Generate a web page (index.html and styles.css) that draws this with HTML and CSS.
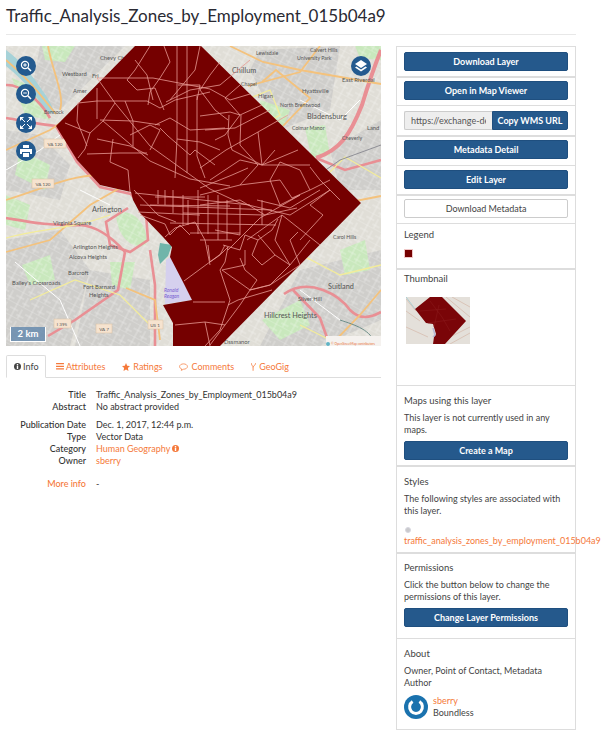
FILE: index.html
```html
<!DOCTYPE html>
<html lang="en">
<head>
	<meta charset="UTF-8">
	<title>Traffic_Analysis_Zones_by_Employment_015b04a9</title>
	<link rel="stylesheet" href="styles.css">
</head>
<body>
	<div class="page">
		<h1 class="title">Traffic_Analysis_Zones_by_Employment_015b04a9</h1>
		<div class="layout">
			<!--left column-->
			<div class="main">
				<div class="map">
					<svg class="map-art" viewBox="6 46 375 300" width="375" height="300">
						<defs>
							<pattern id="streets" width="17" height="13" patternUnits="userSpaceOnUse" patternTransform="rotate(28)">
								<path d="M0 0H17M5 0V13M0 6H9M12 3V13M9 10H17" stroke="#fff" stroke-width=".6" fill="none"/>
							</pattern>
							<filter id="soft"><feGaussianBlur stdDeviation=".4"/></filter>
						</defs>
						<g filter="url(#soft)">
							<rect x="6" y="46" width="375" height="300" fill="#e0ded7"/>
							<!--urban and park patches-->
							<g fill="#cfcecb">
								<path d="M40 46L125 46L60 110L30 100Z"/>
								<path d="M6 240L60 230L90 270L70 346L6 346Z"/>
								<path d="M90 270L150 280L150 346L75 346Z"/>
								<path d="M260 50L340 46L330 110L280 130L250 70Z"/>
								<path d="M330 150L381 120L381 190L340 190Z"/>
								<path d="M300 270L381 250L381 320L320 346L260 346Z"/>
								<path d="M6 130L40 135L70 165L60 200L6 190Z"/>
							</g>
							<g fill="#c9e8bd">
								<path d="M42 46L75 46L65 62L45 60Z"/>
								<path d="M12 78L40 90L50 120L25 115Z"/>
								<path d="M116 215C130 205 150 225 146 245C135 250 118 240 116 215Z"/>
								<path d="M22 265L50 255L55 280L30 285Z"/>
								<path d="M110 262L135 262L130 290L112 285Z"/>
								<path d="M260 100L290 110L280 135L262 125Z"/>
								<path d="M305 128L325 125L330 155L312 160Z"/>
								<path d="M355 46L381 46L381 60L360 58Z"/>
								<path d="M340 250L365 240L370 270L345 275Z"/>
								<path d="M262 320L300 300L310 325L280 340Z"/>
								<path d="M20 150L50 165L45 190L15 175Z"/>
								<path d="M6 195L30 205L25 230L6 225Z"/>
							</g>
							<rect x="6" y="46" width="375" height="300" fill="url(#streets)" opacity=".6"/>
							<path d="M166 260L172 256L185 285L192 300L165 304Z" fill="#d5d0ee"/>
							<path d="M6 50C20 60 32 75 42 90C50 100 52 108 56 114L46 112C38 98 28 84 6 66Z" fill="#a6d2d8"/>
							<path d="M160 243L172 245L168 256L160 264L158 255Z" fill="#6fb5aa"/>
							<!--roads-->
							<g fill="none" stroke="#e98f94" stroke-width="2.6">
								<path d="M6 118C20 120 36 124 56 126L77 162L100 187L131 194"/>
								<path d="M6 85C20 84 40 100 50 118"/>
								<path d="M131 194L146 214L148 240L130 252L110 245L106 222L128 208"/>
								<path d="M6 218C30 222 50 226 80 225C95 226 110 235 125 252"/>
								<path d="M125 252L118 290L75 320L48 336"/>
								<path d="M150 250L155 285L155 346"/>
								<path d="M284 294C310 276 340 296 350 310C360 320 370 318 381 312"/>
								<path d="M293 290L320 318L330 346"/>
								<path d="M316 158C340 150 350 135 362 105C368 85 375 65 381 50" stroke-width="4"/>
								<path d="M316 158L345 170L381 160"/>
							</g>
							<g fill="none" stroke="#f4c27c" stroke-width="1.8">
								<path d="M48 46C52 70 65 95 60 110"/>
								<path d="M6 60C30 80 40 95 56 114"/>
								<path d="M6 150L50 130L65 120"/>
								<path d="M6 200C40 190 70 175 100 175"/>
								<path d="M6 252L50 240L90 205L125 185"/>
								<path d="M230 46L263 62L300 70L381 84"/>
								<path d="M248 86L300 72L320 46"/>
								<path d="M262 82L276 70L310 98L283 126"/>
								<path d="M126 288L155 300L160 340"/>
								<path d="M340 204L381 196"/>
								<path d="M330 346L360 315L381 290"/>
							</g>
							<g fill="none" stroke="#f3ec9a" stroke-width="1.3">
								<path d="M6 238C40 228 70 230 110 215"/>
								<path d="M245 100L270 90L280 115L258 128"/>
								<path d="M30 300L75 280L120 295L150 325"/>
								<path d="M292 250L340 275L381 265"/>
								<path d="M330 172L345 157L381 178"/>
								<path d="M300 325L340 345"/>
							</g>
							<g fill="none" stroke="#fff" stroke-width="1">
								<path d="M6 170L40 150L60 135"/>
								<path d="M15 262L60 300L80 346"/>
								<path d="M80 190L110 205"/>
								<path d="M300 100L340 120L360 100"/>
								<path d="M300 290L340 320"/>
							</g>
							<path d="M310 181L340 160L381 145" fill="none" stroke="#8f8f96" stroke-width="1"/>
							<path d="M340 320C355 325 372 330 375 345" fill="none" stroke="#6d8f8a" stroke-width="1"/>
						</g>
						<!--labels-->
						<g class="map-label">
							<text x="100" y="60">Chevy Ch</text>
							<text x="62" y="76">Westbard</text>
							<text x="92" y="78">Fri</text>
							<text x="73" y="93">Amer</text>
							<text x="44" y="114" class="map-label-sm">Bannock</text>
							<text x="256" y="55" class="map-label-sm">Lewisdale</text>
							<text x="310" y="52" class="map-label-sm">Calvert Hills</text>
							<text x="297" y="60" class="map-label-sm">University Park</text>
							<text x="232" y="73" class="map-label-big">Chillum</text>
							<text x="241" y="86" class="map-label-sm">Chapel</text>
							<text x="258" y="98">Higan</text>
							<text x="302" y="93">Hyattsville</text>
							<text x="342" y="82">East Riverdal</text>
							<text x="280" y="107" class="map-label-sm">North Brentwood</text>
							<text x="307" y="119" class="map-label-big">Bladensburg</text>
							<text x="292" y="130" class="map-label-sm">Colmar Manor</text>
							<text x="342" y="140" class="map-label-sm">Cheverly</text>
							<text x="367" y="130">Land</text>
							<text x="92" y="212" class="map-label-big">Arlington</text>
							<text x="53" y="225">Virginia Square</text>
							<text x="73" y="249">Arlington Heights</text>
							<text x="69" y="259">Alcova Heights</text>
							<text x="68" y="275">Barcroft</text>
							<text x="12" y="285">Bailey's Crossroads</text>
							<text x="83" y="289">Fort Barnard</text>
							<text x="89" y="297">Heights</text>
							<text x="333" y="239" class="map-label-sm">Carol Hills</text>
							<text x="328" y="289" class="map-label-big">Suitland</text>
							<text x="298" y="301">Silver Hill</text>
							<text x="264" y="318" class="map-label-big">Hillcrest Heights</text>
							<text x="224" y="344">Dssmanor</text>
							<text x="164" y="292" class="map-label-air">Ronald</text>
							<text x="164" y="298" class="map-label-air">Reagan</text>
						</g>
						<!--route shields-->
						<g class="map-shield">
							<rect x="44" y="139" width="22" height="9"/><text x="55" y="146">VA 120</text>
							<rect x="32" y="179" width="22" height="9"/><text x="43" y="186">VA 120</text>
							<rect x="54" y="319" width="17" height="9"/><text x="62" y="326">I 395</text>
							<rect x="96" y="324" width="16" height="9"/><text x="104" y="331">VA 7</text>
							<rect x="148" y="320" width="15" height="9"/><text x="155" y="327">US 1</text>
						</g>
						<!--zones-->
						<path d="M135 46L201 46L361 203L220 346L173 346L173 323L163 305L192 300L183 282L170 257L172 247L163 237L140 213L133 200L131 192L100 185L77 160L56 126Z" fill="#750000"/>
						<g fill="none" stroke="#e99a94" stroke-width=".8">
							<path d="M97 78L153 78L210 89L230 100L250 94"/>
							<path d="M97 78L115 103L150 146L210 189L240 203L290 215L330 190"/>
							<path d="M78 103L97 101L147 101L160 108L175 100L210 92"/>
							<path d="M97 88L97 119"/>
							<path d="M115 103L103 121L90 133L85 149L78 158"/>
							<path d="M65 123L90 133"/>
							<path d="M78 103L77 121L87 146"/>
							<path d="M103 121L150 161L190 179L230 186"/>
							<path d="M97 139L130 146L148 155"/>
							<path d="M87 154L120 153L147 153"/>
							<path d="M125 101L133 121L133 146"/>
							<path d="M100 120L133 121L160 125"/>
							<path d="M113 139L110 162L128 170L130 192"/>
							<path d="M177 46L177 139L175 178"/>
							<path d="M187 46L187 111L187 173"/>
							<path d="M178 85L200 85L197 100"/>
							<path d="M150 46L135 70L127 80L137 90L155 88L164 110"/>
							<path d="M164 46L170 62L160 78L150 92L148 105"/>
							<path d="M135 60L147 75L153 100"/>
							<path d="M197 96L197 156L205 178"/>
							<path d="M166 102L190 90L220 85L250 60"/>
							<path d="M155 125L170 118L190 130L225 128"/>
							<path d="M160 128L168 136L190 155L195 150L215 165"/>
							<path d="M130 135L150 125L160 130L150 150"/>
							<path d="M177 139L200 142L220 150"/>
							<path d="M200 46L195 70L170 100"/>
							<path d="M220 62L210 75L200 90L215 110L228 120"/>
							<path d="M240 85L225 98L240 115L225 135L215 140"/>
							<path d="M205 130L235 128L270 110"/>
							<path d="M200 116L230 112L240 115L262 105"/>
							<path d="M229 115L228 135L232 150L262 165L298 150"/>
							<path d="M200 168L226 150L258 132L288 115"/>
							<path d="M241 115L240 145L258 165L240 185"/>
							<path d="M258 132L262 165L310 165"/>
							<path d="M210 180L240 160L262 165L275 150"/>
							<path d="M280 162L300 170L310 190L330 180"/>
							<path d="M200 188L232 175L248 168"/>
							<path d="M280 162L270 180L280 205L300 195"/>
							<path d="M200 195L240 185L280 180L292 198L310 190"/>
							<path d="M310 167L320 180L330 190L340 200"/>
							<path d="M200 205L240 200L265 215L297 208"/>
							<!--downtown grid-->
							<path d="M158 190L158 204M165 190L165 205M173 190L173 213M183 195L183 225M188 200L188 225M198 190L198 234M208 195L208 234M218 195L218 240M227 200L227 240M240 205L240 235M262 200L262 225"/>
							<path d="M135 193L250 205M155 197L205 197M150 205L230 206M140 205L272 210M183 213L264 215M138 212L200 215M170 223L276 225M190 233L240 233M200 240L232 240"/>
							<path d="M140 215L165 224L170 235L180 225L190 235"/>
							<path d="M134 190L158 215L176 222"/>
							<!--southeast-->
							<path d="M165 237L175 228L195 222L205 240L210 265"/>
							<path d="M208 245L210 262L220 255L225 245"/>
							<path d="M184 281L222 253L228 247L225 262L220 270L225 285L230 300L220 330L205 346"/>
							<path d="M223 245L240 250L245 235L258 240L272 230L278 219"/>
							<path d="M247 240L282 215L320 245"/>
							<path d="M245 250L245 265L222 270L250 290L240 305L225 325L210 345"/>
							<path d="M240 258L245 270L257 280L250 290L270 285L300 265"/>
							<path d="M258 235L275 255L290 265L270 285L250 290"/>
							<path d="M282 215L275 240L290 265L310 240"/>
							<path d="M298 232L290 240L300 265"/>
							<path d="M258 240L252 255L262 265L275 255"/>
							<path d="M272 290L238 300M238 300L228 305"/>
							<path d="M205 322L175 325M205 322L210 346M225 325L205 322M193 302L225 302"/>
							<path d="M228 250L260 218L300 195"/>
							<path d="M240 235L215 230M257 200L290 208L320 190"/>
							<path d="M330 190L310 205L323 215L300 240"/>
						</g>
						<!--attribution-->
						<rect x="326" y="336" width="55" height="10" fill="#f5f2ef"/>
						<circle cx="328" cy="344" r="2" fill="#5fb3c4"/>
						<text x="331" y="345" class="map-attr">© OpenStreetMap contributors</text>
					</svg>
					<div class="scale">2 km</div>
					<button class="map-btn zoom-in"><svg width="12" height="12" viewBox="0 0 12 12"><circle cx="5" cy="5" r="3.6" fill="none" stroke="#fff" stroke-width="1.2"/><path d="M7.8 7.8L11 11" stroke="#fff" stroke-width="1.6"/><path d="M3.2 5H6.8M5 3.2V6.8" stroke="#fff"/></svg></button>
					<button class="map-btn zoom-out"><svg width="12" height="12" viewBox="0 0 12 12"><circle cx="5" cy="5" r="3.6" fill="none" stroke="#fff" stroke-width="1.2"/><path d="M7.8 7.8L11 11" stroke="#fff" stroke-width="1.6"/><path d="M3.2 5H6.8" stroke="#fff"/></svg></button>
					<button class="map-btn zoom-fit"><svg width="12" height="12" viewBox="0 0 12 12" fill="#fff"><path d="M0 0H4L0 4ZM12 0V4L8 0ZM0 12V8L4 12ZM12 12H8L12 8Z"/><path d="M2 2L5 5M10 2L7 5M2 10L5 7M10 10L7 7" stroke="#fff"/></svg></button>
					<button class="map-btn print"><svg width="12" height="12" viewBox="0 0 12 12" fill="#fff"><path d="M3 0H9V3H3ZM0 4H12V9H10V7H2V9H0ZM3 8H9V12H3Z"/></svg></button>
					<button class="map-btn layers"><svg width="12" height="12" viewBox="0 0 12 12" fill="#fff"><path d="M6 0L12 4L6 8L0 4Z"/><path d="M1.5 6.5L6 9.5L10.5 6.5L12 7.5L6 11.5L0 7.5Z"/></svg></button>
				</div>

				<ul class="tabs">
					<li class="tab active"><svg width="7" height="7" viewBox="0 0 10 10"><circle cx="5" cy="5" r="5" fill="#444"/><path d="M4 4H6V8.5H4ZM4 1.5H6V3.2H4Z" fill="#fff"/></svg>Info</li>
					<li class="tab tab-bars"><svg width="8" height="7" viewBox="0 0 9 8" fill="#f5793a"><path d="M0 0H9V1.5H0ZM0 3H9V4.5H0ZM0 6H9V7.5H0Z"/></svg>Attributes</li>
					<li class="tab"><svg width="8" height="8" viewBox="0 0 10 10" fill="#f5793a"><path d="M5 0L6.5 3.4L10 3.8L7.4 6.2L8.1 10L5 8.1L1.9 10L2.6 6.2L0 3.8L3.5 3.4Z"/></svg>Ratings</li>
					<li class="tab"><svg width="9" height="8" viewBox="0 0 10 9"><path d="M5 1C7.5 1 9.4 2.3 9.4 4S7.5 7 5 7L2.5 8.3L3 6.7C1.5 6.3.6 5.2.6 4C.6 2.3 2.5 1 5 1Z" fill="none" stroke="#f5793a" stroke-width=".8"/></svg>Comments</li>
					<li class="tab"><svg width="5" height="8" viewBox="0 0 6 9" fill="none" stroke="#f5793a"><path d="M.5 0C.5 3 2.5 3 2.5 5V9M5.5 0C5.5 2 3 3 2.5 5"/></svg>GeoGig</li>
				</ul>

				<dl class="info">
					<dt>Title</dt><dd>Traffic_Analysis_Zones_by_Employment_015b04a9</dd>
					<dt>Abstract</dt><dd>No abstract provided</dd>
					<dt class="gap">Publication Date</dt><dd class="gap">Dec. 1, 2017, 12:44 p.m.</dd>
					<dt>Type</dt><dd>Vector Data</dd>
					<dt>Category</dt><dd><a href="#">Human Geography <svg width="7" height="7" viewBox="0 0 10 10"><circle cx="5" cy="5" r="5" fill="#f5793a"/><path d="M4 4H6V8.5H4ZM4 1.5H6V3.2H4Z" fill="#fff"/></svg></a></dd>
					<dt>Owner</dt><dd><a href="#">sberry</a></dd>
					<dt class="more"><a href="#">More info</a></dt><dd class="more">-</dd>
				</dl>
			</div>

			<!--right column-->
			<ul class="side">
				<li class="box box-btn"><a class="btn" href="#">Download Layer</a></li>
				<li class="box box-btn box-tight thick"><a class="btn" href="#">Open in Map Viewer</a></li>
				<li class="box box-btn">
					<div class="copy"><input class="copy-input" value="https://exchange-dev.boundlessgeo.com/geoserver/wms" readonly><a class="btn copy-btn" href="#">Copy WMS URL</a></div>
				</li>
				<li class="box box-btn thick"><a class="btn" href="#">Metadata Detail</a></li>
				<li class="box box-btn box-tight"><a class="btn" href="#">Edit Layer</a></li>
				<li class="box box-btn box-tight thick"><a class="btn btn-plain" href="#">Download Metadata</a></li>
				<li class="box box-legend">
					<div class="box-title">Legend</div>
					<div class="legend-swatch"></div>
				</li>
				<li class="box box-thumb thick">
					<div class="box-title">Thumbnail</div>
					<svg class="thumb" width="64" height="47" viewBox="0 0 64 47">
						<rect width="64" height="47" fill="#e4e0da"/>
						<path d="M0 2L10 14M40 0L64 20M30 47L64 30M0 30L22 40M46 0L64 10M0 14L14 24M44 47L64 36" stroke="#d9c4b8" fill="none"/>
						<path d="M0 0L9 12" stroke="#a9ccd0" fill="none"/>
						<path d="M9 12L24 0L36 0L60 24L39 47L27 47L28 40L30 37L27 27L20 26Z" fill="#7a0508"/>
						<path d="M27 31L29 38L27 40" stroke="#b7b9d6" stroke-width="1.5" fill="none"/>
						<path d="M24 4L36 20L44 34M14 14L40 12M22 26L50 22M33 8L28 30" stroke="#8c1c1e" stroke-width=".5" fill="none"/>
					</svg>
				</li>
				<li class="box box-maps">
					<div class="box-title">Maps using this layer</div>
					<p class="box-text">This layer is not currently used in any maps.</p>
					<a class="btn" href="#">Create a Map</a>
				</li>
				<li class="box box-styles thick">
					<div class="box-title">Styles</div>
					<p class="box-text">The following styles are associated with this layer.</p>
					<div class="style-dot"></div>
					<a class="style-link" href="#">traffic_analysis_zones_by_employment_015b04a9</a>
				</li>
				<li class="box box-perm thick">
					<div class="box-title">Permissions</div>
					<p class="box-text">Click the button below to change the permissions of this layer.</p>
					<a class="btn" href="#">Change Layer Permissions</a>
				</li>
				<li class="box box-about">
					<div class="box-title">About</div>
					<p class="box-text">Owner, Point of Contact, Metadata Author</p>
					<div class="owner">
						<svg width="24" height="24" viewBox="0 0 24 24"><circle cx="12" cy="12" r="12" fill="#1a72ae"/><path d="M8.6 6.6A6.4 6.4 0 1 0 15.4 6.6" fill="none" stroke="#fff" stroke-width="3"/></svg>
						<div class="owner-text"><a href="#">sberry</a><span>Boundless</span></div>
					</div>
				</li>
			</ul>
		</div>
	</div>
</body>
</html>
```

FILE: styles.css
```css
* {
    padding: 0;
    margin: 0;
    list-style: none;
    box-sizing: border-box;
}

body {
    font-family: "Lato", "Liberation Sans", sans-serif;
    font-size: 9px;
    line-height: 12px;
    color: #333;
    background: #fff;
}

a {
    color: #f5793a;
    text-decoration: none;
}

.page {
    width: 576px;
    padding: 6px 0 0 6px;
}

.title {
    height: 29px;
    font-size: 17px;
    line-height: 19px;
    font-weight: 400;
    color: #2a2a33;
    border-bottom: 1px solid #e8e8e8;
}

.layout {
    display: flex;
    gap: 15px;
    margin-top: 11px;
}

.main {
    width: 375px;
}

/* map */
.map {
    position: relative;
    width: 375px;
    height: 300px;
    overflow: hidden;
}

.map-art {
    display: block;
}

.map-label {
    font-size: 5.8px;
    fill: #555;
}

.map-label-sm {
    font-size: 5.2px;
}

.map-label-big {
    font-size: 7.3px;
}

.map-label-air {
    font-size: 5px;
    font-style: italic;
    fill: #7a5fd0;
}

.map-shield rect {
    fill: #f6e3cf;
    stroke: #d8bfa0;
    stroke-width: .5;
}

.map-shield text {
    font-size: 4.6px;
    fill: #555;
    text-anchor: middle;
}

.map-attr {
    font-size: 3.2px;
    fill: #e8743a;
}

.scale {
    position: absolute;
    left: 4px;
    bottom: 4px;
    width: 36px;
    height: 15px;
    background: rgba(90, 130, 170, .75);
    border: 1px solid #fff;
    border-top: 0;
    color: #fff;
    font-size: 9.5px;
    font-weight: 700;
    line-height: 14px;
    text-align: center;
}

.map-btn {
    position: absolute;
    left: 10px;
    width: 20px;
    height: 20px;
    border: 0;
    border-radius: 50%;
    background: #235a8f;
    display: flex;
    align-items: center;
    justify-content: center;
}

.zoom-in { top: 10px; }
.zoom-out { top: 38px; }
.zoom-fit { top: 67px; }
.print { top: 95px; }

.layers {
    left: 345px;
    top: 10px;
}

/* tabs */
.tabs {
    display: flex;
    height: 23px;
    margin-top: 9px;
    border-bottom: 1px solid #ddd;
}

.tab {
    display: flex;
    align-items: center;
    gap: 3px;
    height: 23px;
    padding: 0 8px 0 9px;
    color: #f5793a;
    white-space: nowrap;
}

.tab-bars {
    gap: 2px;
    padding-left: 10px;
}

.tab.active {
    color: #444;
    width: 40px;
    gap: 2px;
    padding: 0 0 0 7px;
    background: #fff;
    border: 1px solid #ddd;
    border-bottom-color: #fff;
    border-radius: 2px 2px 0 0;
}

/* info table */
.info {
    display: grid;
    grid-template-columns: 80px 1fr;
    column-gap: 10px;
    margin-top: 11px;
}

.info dt {
    text-align: right;
    font-weight: 500;
    color: #333;
}

.info .gap {
    margin-top: 6px;
}

.info .more {
    margin-top: 11px;
}

/* sidebar */
.side {
    width: 180px;
    border: 1px solid #ddd;
    height: 684px;
}

.box {
    padding: 5px 7px 0;
    border-top: 1px solid #ddd;
}

.box:first-child {
    border-top: 0;
}

.box.thick {
    border-top-width: 2px;
    padding-top: 3px;
}

.box-btn { height: 30px; }
.box-btn:first-child { height: 29px; }
.box-tight { height: 29px; padding-top: 4px; }
.box-legend { height: 45px; }
.box-thumb { height: 117px; }
.box-maps { height: 80px; padding-top: 9px; }
.box-styles.thick { height: 87px; padding-top: 9px; }
.box-perm.thick { height: 86px; padding-top: 8px; }
.box-about { height: 90px; padding-top: 9px; }

.box-title {
    font-size: 9.5px;
    line-height: 12px;
    color: #444;
    margin-bottom: 5px;
}

.box-text {
    color: #444;
    margin-bottom: 5px;
}

.btn {
    display: block;
    height: 19px;
    background: #25598c;
    border: 1px solid #1f4f7f;
    border-radius: 2px;
    color: #fff;
    font-weight: 700;
    line-height: 17px;
    text-align: center;
}

.btn-plain {
    background: #fff;
    border-color: #ccc;
    color: #444;
    font-weight: 400;
}

.copy {
    display: flex;
}

.copy-input {
    width: 88px;
    height: 19px;
    padding: 0 6px;
    background: #eee;
    border: 1px solid #ccc;
    border-right: 0;
    border-radius: 2px 0 0 2px;
    font: 9px "Lato", "Liberation Sans", sans-serif;
    color: #555;
}

.copy-btn {
    flex: 1;
    border-radius: 0 2px 2px 0;
}

.legend-swatch {
    width: 7px;
    height: 7px;
    margin: 9px 0 0 1px;
    background: #750000;
    outline: 1px solid #f0c8c8;
}

.thumb {
    display: block;
    margin: 12px 0 0 2px;
}

.style-dot {
    width: 6px;
    height: 6px;
    margin: 10px 0 0 1px;
    border-radius: 50%;
    background: #c9c9cc;
    border: 1px solid #d8d8e0;
}

.style-link {
    display: block;
    margin-top: 2px;
    white-space: nowrap;
}

.owner {
    display: flex;
    gap: 5px;
    margin-top: 6px;
}

.owner-text a,
.owner-text span {
    display: block;
}

.owner-text span {
    color: #444;
}
```
